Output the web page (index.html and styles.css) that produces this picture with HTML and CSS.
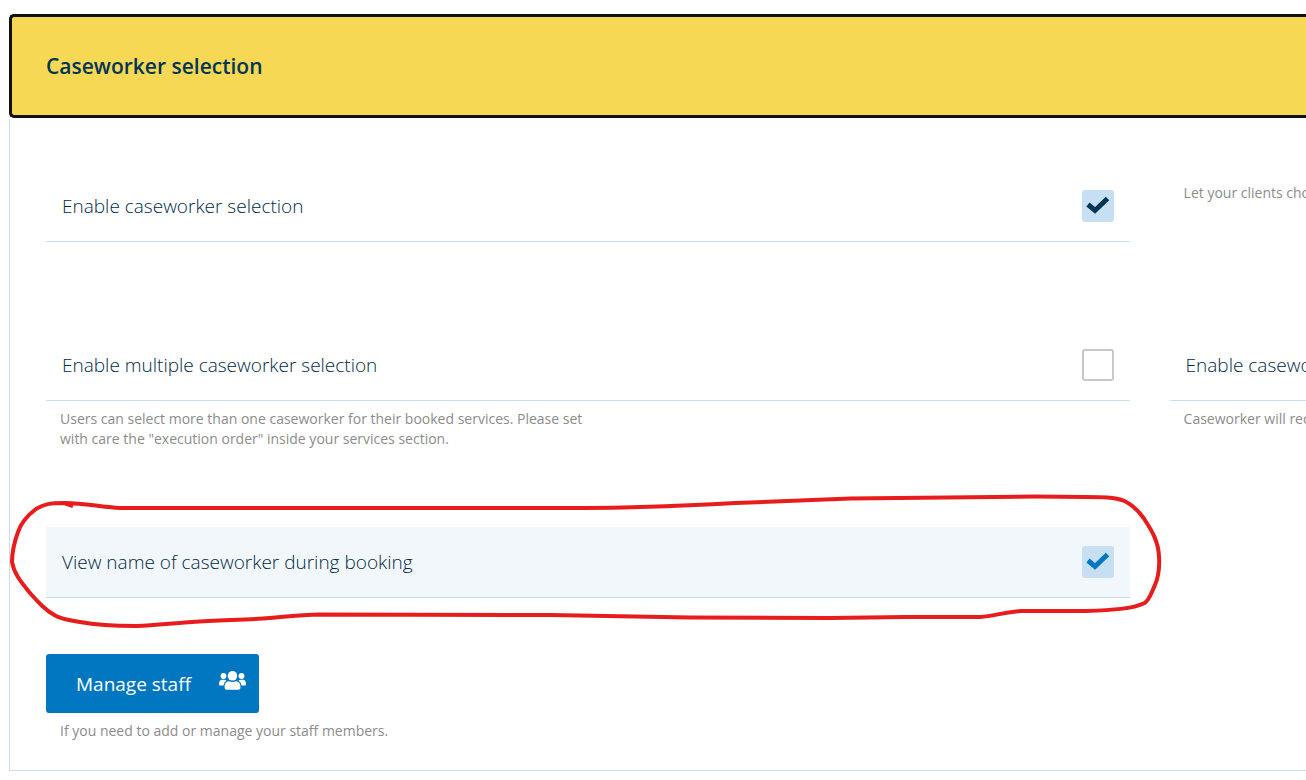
FILE: index.html
```html
<!DOCTYPE html>
<html lang="en">
<head>
<meta charset="utf-8">
<title>Caseworker selection</title>
<link rel="stylesheet" href="styles.css">
</head>
<body>
<main class="section">
  <h2 class="section-header">Caseworker selection</h2>
  <div class="section-body">
    <div class="settings">
      <div class="field field-solo">
        <div class="option">
          <label class="option-label" for="enable">Enable caseworker selection</label>
          <span class="check">
            <input class="check-input" type="checkbox" id="enable" checked>
            <svg class="check-mark" viewBox="0 0 32 32" aria-hidden="true"><path d="M6 14.500L13 20.500L25.500 8.500"/></svg>
          </span>
        </div>
      </div>
      <p class="hint hint-side">Let your clients choose the caseworker</p>

      <div class="field">
        <div class="option">
          <label class="option-label" for="multiple">Enable multiple caseworker selection</label>
          <span class="check"><input class="check-input" type="checkbox" id="multiple"></span>
        </div>
        <p class="hint hint-narrow">Users can select more than one caseworker for their booked services. Please set with care the "execution order" inside your services section.</p>
      </div>
      <div class="field">
        <div class="option">
          <label class="option-label" for="notify">Enable caseworker notifications</label>
          <span class="check"><input class="check-input" type="checkbox" id="notify"></span>
        </div>
        <p class="hint">Caseworker will receive a notification</p>
      </div>

      <div class="field field-marked">
        <div class="option option-active">
          <label class="option-label" for="view-name">View name of caseworker during booking</label>
          <span class="check">
            <input class="check-input" type="checkbox" id="view-name" checked>
            <svg class="check-mark" viewBox="0 0 32 32" aria-hidden="true"><path d="M6 14.500L13 20.500L25.500 8.500"/></svg>
          </span>
        </div>
        <svg class="marker" viewBox="6 487 1163 151" preserveAspectRatio="none" aria-hidden="true">
          <path d="M73 506L64 503C50 503 44 504 36 509C28 515 21 523 18 532C14 543 12 553 12 562C14 574 22 583 30 593C38 602 46 611 56 616C64 620 70 620 80 622C96 625 116 626 136 626C158 625 174 623 192 622C220 620 246 620 270 618C290 616 305 615 318 614.500L550 615C600 616 640 616.500 690 617.500L830 618L905 617L980 617C994 616 1003 612 1021 611L1085 611C1112 610 1132 609 1144 603C1149 600 1151 592 1154 586C1158 577 1159 568 1158.500 558C1158 540 1150 529 1143 518C1138 511 1132 505 1124 501C1114 497 1101 497 1085 497L1035 496.500L850 498.500L735 503C700 505 675 506 640 507C600 508.500 560 508 455 508L120 508C100 507 85 503 65 503"/>
        </svg>
      </div>
    </div>
    <button class="staff-button" type="button">
      <span>Manage staff</span>
      <svg class="staff-icon" viewBox="0 0 27 19" aria-hidden="true">
        <circle cx="13.500" cy="4.800" r="4.800"/>
        <circle cx="4.500" cy="5" r="2.900"/>
        <circle cx="22.500" cy="5" r="2.900"/>
        <path d="M5.500 16.500Q5.500 10.500 10 10.300Q13.500 11.700 17 10.300Q21.500 10.500 21.500 16.500Q21.500 18.700 19.200 18.700H7.800Q5.500 18.700 5.500 16.500Z"/>
        <path d="M0 13.500Q0 9 3 8.800H5Q6.500 8.800 7.500 9.800Q5 11 4.500 14.500H1Q0 14.500 0 13.500Z"/>
        <path d="M27 13.500Q27 9 24 8.800H22Q20.500 8.800 19.500 9.800Q22 11 22.500 14.500H26Q27 14.500 27 13.500Z"/>
      </svg>
    </button>
    <p class="hint">If you need to add or manage your staff members.</p>
  </div>
</main>
</body>
</html>
```
FILE: styles.css
```css
* { box-sizing: border-box; }

body {
  margin: 0;
  overflow-x: hidden;
  background: #fff;
  color: #003655;
  font-family: "Open Sans", "Noto Sans", sans-serif;
}

.section { padding: 14px 0 0 9px; }

.section-header {
  margin: 0;
  padding: 34px;
  border: 3px solid #111;
  border-right: 0;
  border-radius: 5px 0 0 5px;
  background: #f6d855;
  font-size: 21px;
  font-weight: 600;
  line-height: 30px;
}

.section-body {
  margin-top: 1px;
  padding: 52px 0 29px 36px;
  border-left: 1px solid #c7dff3;
  border-bottom: 1px solid #c7dff3;
}

.settings {
  display: grid;
  grid-template-columns: 86% 86%;
  gap: 78px 40px;
  margin-bottom: 56px;
}

.field-solo { padding-bottom: 10px; }
.field-marked { position: relative; }

.option {
  display: flex;
  align-items: center;
  justify-content: space-between;
  height: 71px;
  padding: 0 16px;
  border-bottom: 1px solid #c7dff3;
}

.option-active { background: #f2f7fb; }

.option-label {
  color: #002a45;
  font-size: 19px;
  font-weight: 300;
  line-height: 28px;
}

.check {
  display: grid;
  width: 32px;
  height: 32px;
}

.check-input,
.check-mark { grid-area: 1 / 1; }

.check-input {
  appearance: none;
  width: 32px;
  height: 32px;
  margin: 0;
  border: 2px solid #c8c8c8;
  border-radius: 3px;
  background: #fff;
}

.check-input:checked {
  border-color: #c7dff3;
  background: #c7dff3;
}

.check-mark {
  width: 32px;
  height: 32px;
  pointer-events: none;
  fill: none;
  stroke: #003655;
  stroke-width: 5;
}

.option-active .check-mark { stroke: #0077c0; }

.hint {
  margin: 0;
  padding: 8px 14px 0;
  color: #8c8c8c;
  font-size: 14px;
  line-height: 20px;
}

.hint-side { padding-top: 12px; }
.hint-narrow { max-width: 568px; }

.marker {
  position: absolute;
  top: -40px;
  left: -40px;
  width: calc(100% + 80px);
  height: 151px;
  pointer-events: none;
  fill: none;
  stroke: #e81c1c;
  stroke-width: 4;
  stroke-linejoin: round;
}

.staff-button {
  display: flex;
  align-items: center;
  gap: 28px;
  height: 59px;
  padding: 0 13px 0 30px;
  border: 0;
  border-radius: 3px;
  background: #0077c0;
  color: #fff;
  font-family: inherit;
  font-size: 19px;
  line-height: 28px;
}

.staff-icon {
  width: 27px;
  height: 19px;
  margin-bottom: 6px;
  fill: #fff;
}
```
